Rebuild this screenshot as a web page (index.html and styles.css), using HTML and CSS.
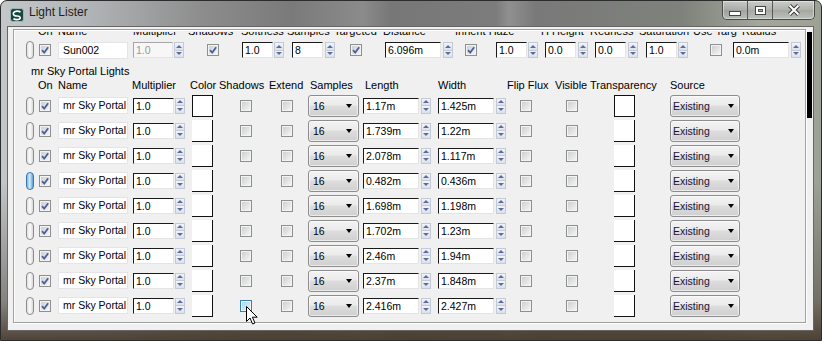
FILE: index.html
```html
<!DOCTYPE html>
<html lang="en">
<head>
    <meta charset="UTF-8">
    <title>Light Lister</title>
    <link rel="stylesheet" href="styles.css">
</head>
<body>

<div class="window">
    <div class="titlebar">
        <svg class="app-icon" viewBox="0 0 14 14">
            <rect x="0.5" y="0.5" width="13" height="13" rx="2.5" fill="#17463f" stroke="#9bb8b0"/>
            <path d="M10.5 4.2 C9 2.6 4.2 2.6 3.4 5 C2.8 7 4.6 8 7 8 C9.2 8 10.6 9 10.2 10.4 C9.6 12 5 12 3.4 10.6" fill="none" stroke="#fff" stroke-width="1.6"/>
        </svg>
        <span class="title">Light Lister</span>
        <div class="caption-buttons">
            <div class="cap-btn min"><span></span></div>
            <div class="cap-btn max"><span></span></div>
            <div class="cap-btn close">
                <svg viewBox="0 0 14 12"><path d="M2.5 1.5 L11.5 10.5 M11.5 1.5 L2.5 10.5" stroke="#3a3a3a" stroke-width="4"/><path d="M2.5 1.5 L11.5 10.5 M11.5 1.5 L2.5 10.5" stroke="#fff" stroke-width="2"/></svg>
            </div>
        </div>
    </div>

    <div class="client">
        <div class="panel">
            <div class="viewport">
                <div class="sheet">

                    <div class="hdr hdr-sun">
                        <span></span><span>On</span><span>Name</span><span>Multiplier</span><span>Shadows</span><span>Softness</span><span>Samples</span><span>Targeted</span><span>Distance</span><span>Inherit Haze</span><span>H Height</span><span>Redness</span><span>Saturation</span><span>Use Targ</span><span>Radius</span>
                    </div>

                    <div class="row row-sun">
                        <span class="slider"></span>
                        <span class="cb"><svg viewBox="0 0 10 10"><path d="M2 5.2 L4.2 7.6 L8.2 2.2"/></svg></span>
                        <span class="name">Sun002</span>
                        <span class="num"><span class="field w40 disabled">1.0</span><span class="spin"><i></i><i class="down"></i></span></span>
                        <span class="cb"><svg viewBox="0 0 10 10"><path d="M2 5.2 L4.2 7.6 L8.2 2.2"/></svg></span>
                        <span class="num"><span class="field w31">1.0</span><span class="spin"><i></i><i class="down"></i></span></span>
                        <span class="num"><span class="field w31">8</span><span class="spin gap2"><i></i><i class="down"></i></span></span>
                        <span class="cb"><svg viewBox="0 0 10 10"><path d="M2 5.2 L4.2 7.6 L8.2 2.2"/></svg></span>
                        <span class="num"><span class="field w56">6.096m</span><span class="spin gap2"><i></i><i class="down"></i></span></span>
                        <span class="cb"><svg viewBox="0 0 10 10"><path d="M2 5.2 L4.2 7.6 L8.2 2.2"/></svg></span>
                        <span class="num"><span class="field w31">1.0</span><span class="spin gap1"><i></i><i class="down"></i></span></span>
                        <span class="num"><span class="field w31">0.0</span><span class="spin gap2"><i></i><i class="down"></i></span></span>
                        <span class="num"><span class="field w31">0.0</span><span class="spin gap2"><i></i><i class="down"></i></span></span>
                        <span class="num"><span class="field w31">1.0</span><span class="spin gap1"><i></i><i class="down"></i></span></span>
                        <span class="cb"></span>
                        <span class="num"><span class="field w56">0.0m</span><span class="spin gap2"><i></i><i class="down"></i></span></span>
                    </div>

                    <div class="section">mr Sky Portal Lights</div>

                    <div class="hdr hdr-portal">
                        <span></span><span>On</span><span>Name</span><span>Multiplier</span><span>Color</span><span>Shadows</span><span>Extend</span><span>Samples</span><span>Length</span><span>Width</span><span>Flip Flux</span><span>Visible</span><span>Transparency</span><span>Source</span>
                    </div>

                    <div class="row row-portal">
                        <span class="slider"></span>
                        <span class="cb"><svg viewBox="0 0 10 10"><path d="M2 5.2 L4.2 7.6 L8.2 2.2"/></svg></span>
                        <span class="name">mr Sky Portal</span>
                        <span class="num"><span class="field w41">1.0</span><span class="spin"><i></i><i class="down"></i></span></span>
                        <span class="swatch boxed"></span>
                        <span class="cb"></span>
                        <span class="cb"></span>
                        <span class="combo samples">16</span>
                        <span class="num"><span class="field w56">1.17m</span><span class="spin gap2"><i></i><i class="down"></i></span></span>
                        <span class="num"><span class="field w56">1.425m</span><span class="spin gap2"><i></i><i class="down"></i></span></span>
                        <span class="cb"></span>
                        <span class="cb"></span>
                        <span class="swatch boxed"></span>
                        <span class="combo source">Existing</span>
                    </div>

                    <div class="row row-portal">
                        <span class="slider"></span>
                        <span class="cb"><svg viewBox="0 0 10 10"><path d="M2 5.2 L4.2 7.6 L8.2 2.2"/></svg></span>
                        <span class="name">mr Sky Portal</span>
                        <span class="num"><span class="field w41">1.0</span><span class="spin"><i></i><i class="down"></i></span></span>
                        <span class="swatch"></span>
                        <span class="cb"></span>
                        <span class="cb"></span>
                        <span class="combo samples">16</span>
                        <span class="num"><span class="field w56">1.739m</span><span class="spin gap2"><i></i><i class="down"></i></span></span>
                        <span class="num"><span class="field w56">1.22m</span><span class="spin gap2"><i></i><i class="down"></i></span></span>
                        <span class="cb"></span>
                        <span class="cb"></span>
                        <span class="swatch"></span>
                        <span class="combo source">Existing</span>
                    </div>

                    <div class="row row-portal">
                        <span class="slider"></span>
                        <span class="cb"><svg viewBox="0 0 10 10"><path d="M2 5.2 L4.2 7.6 L8.2 2.2"/></svg></span>
                        <span class="name">mr Sky Portal</span>
                        <span class="num"><span class="field w41">1.0</span><span class="spin"><i></i><i class="down"></i></span></span>
                        <span class="swatch"></span>
                        <span class="cb"></span>
                        <span class="cb"></span>
                        <span class="combo samples">16</span>
                        <span class="num"><span class="field w56">2.078m</span><span class="spin gap2"><i></i><i class="down"></i></span></span>
                        <span class="num"><span class="field w56">1.117m</span><span class="spin gap2"><i></i><i class="down"></i></span></span>
                        <span class="cb"></span>
                        <span class="cb"></span>
                        <span class="swatch"></span>
                        <span class="combo source">Existing</span>
                    </div>

                    <div class="row row-portal">
                        <span class="slider selected"></span>
                        <span class="cb"><svg viewBox="0 0 10 10"><path d="M2 5.2 L4.2 7.6 L8.2 2.2"/></svg></span>
                        <span class="name">mr Sky Portal</span>
                        <span class="num"><span class="field w41">1.0</span><span class="spin"><i></i><i class="down"></i></span></span>
                        <span class="swatch"></span>
                        <span class="cb"></span>
                        <span class="cb"></span>
                        <span class="combo samples">16</span>
                        <span class="num"><span class="field w56">0.482m</span><span class="spin gap2"><i></i><i class="down"></i></span></span>
                        <span class="num"><span class="field w56">0.436m</span><span class="spin gap2"><i></i><i class="down"></i></span></span>
                        <span class="cb"></span>
                        <span class="cb"></span>
                        <span class="swatch"></span>
                        <span class="combo source">Existing</span>
                    </div>

                    <div class="row row-portal">
                        <span class="slider"></span>
                        <span class="cb"><svg viewBox="0 0 10 10"><path d="M2 5.2 L4.2 7.6 L8.2 2.2"/></svg></span>
                        <span class="name">mr Sky Portal</span>
                        <span class="num"><span class="field w41">1.0</span><span class="spin"><i></i><i class="down"></i></span></span>
                        <span class="swatch"></span>
                        <span class="cb"></span>
                        <span class="cb"></span>
                        <span class="combo samples">16</span>
                        <span class="num"><span class="field w56">1.698m</span><span class="spin gap2"><i></i><i class="down"></i></span></span>
                        <span class="num"><span class="field w56">1.198m</span><span class="spin gap2"><i></i><i class="down"></i></span></span>
                        <span class="cb"></span>
                        <span class="cb"></span>
                        <span class="swatch"></span>
                        <span class="combo source">Existing</span>
                    </div>

                    <div class="row row-portal">
                        <span class="slider"></span>
                        <span class="cb"><svg viewBox="0 0 10 10"><path d="M2 5.2 L4.2 7.6 L8.2 2.2"/></svg></span>
                        <span class="name">mr Sky Portal</span>
                        <span class="num"><span class="field w41">1.0</span><span class="spin"><i></i><i class="down"></i></span></span>
                        <span class="swatch"></span>
                        <span class="cb"></span>
                        <span class="cb"></span>
                        <span class="combo samples">16</span>
                        <span class="num"><span class="field w56">1.702m</span><span class="spin gap2"><i></i><i class="down"></i></span></span>
                        <span class="num"><span class="field w56">1.23m</span><span class="spin gap2"><i></i><i class="down"></i></span></span>
                        <span class="cb"></span>
                        <span class="cb"></span>
                        <span class="swatch"></span>
                        <span class="combo source">Existing</span>
                    </div>

                    <div class="row row-portal">
                        <span class="slider"></span>
                        <span class="cb"><svg viewBox="0 0 10 10"><path d="M2 5.2 L4.2 7.6 L8.2 2.2"/></svg></span>
                        <span class="name">mr Sky Portal</span>
                        <span class="num"><span class="field w41">1.0</span><span class="spin"><i></i><i class="down"></i></span></span>
                        <span class="swatch"></span>
                        <span class="cb"></span>
                        <span class="cb"></span>
                        <span class="combo samples">16</span>
                        <span class="num"><span class="field w56">2.46m</span><span class="spin gap2"><i></i><i class="down"></i></span></span>
                        <span class="num"><span class="field w56">1.94m</span><span class="spin gap2"><i></i><i class="down"></i></span></span>
                        <span class="cb"></span>
                        <span class="cb"></span>
                        <span class="swatch"></span>
                        <span class="combo source">Existing</span>
                    </div>

                    <div class="row row-portal">
                        <span class="slider"></span>
                        <span class="cb"><svg viewBox="0 0 10 10"><path d="M2 5.2 L4.2 7.6 L8.2 2.2"/></svg></span>
                        <span class="name">mr Sky Portal</span>
                        <span class="num"><span class="field w41">1.0</span><span class="spin"><i></i><i class="down"></i></span></span>
                        <span class="swatch"></span>
                        <span class="cb"></span>
                        <span class="cb"></span>
                        <span class="combo samples">16</span>
                        <span class="num"><span class="field w56">2.37m</span><span class="spin gap2"><i></i><i class="down"></i></span></span>
                        <span class="num"><span class="field w56">1.848m</span><span class="spin gap2"><i></i><i class="down"></i></span></span>
                        <span class="cb"></span>
                        <span class="cb"></span>
                        <span class="swatch"></span>
                        <span class="combo source">Existing</span>
                    </div>

                    <div class="row row-portal">
                        <span class="slider"></span>
                        <span class="cb"><svg viewBox="0 0 10 10"><path d="M2 5.2 L4.2 7.6 L8.2 2.2"/></svg></span>
                        <span class="name">mr Sky Portal</span>
                        <span class="num"><span class="field w41">1.0</span><span class="spin"><i></i><i class="down"></i></span></span>
                        <span class="swatch"></span>
                        <span class="cb hover"></span>
                        <span class="cb"></span>
                        <span class="combo samples">16</span>
                        <span class="num"><span class="field w56">2.416m</span><span class="spin gap2"><i></i><i class="down"></i></span></span>
                        <span class="num"><span class="field w56">2.427m</span><span class="spin gap2"><i></i><i class="down"></i></span></span>
                        <span class="cb"></span>
                        <span class="cb"></span>
                        <span class="swatch"></span>
                        <span class="combo source">Existing</span>
                    </div>

                </div>
            </div>
        </div>
        <div class="vscroll"><div class="thumb"></div></div>
    </div>

    <!-- mouse pointer over the last Shadows checkbox -->
    <svg class="cursor" width="14" height="21" viewBox="0 0 14 21">
        <path d="M1.5 1.5 L1.5 16.5 L5 13 L7.6 19 L10 18 L7.4 12.2 L12.2 12.2 Z" fill="#fff" stroke="#000" stroke-width="1" stroke-linejoin="round"/>
    </svg>
</div>

</body>
</html>
```

FILE: styles.css
```css
* {
    box-sizing: border-box;
}

body {
    margin: 0;
    font-family: "Liberation Sans", Arial, sans-serif;
    font-size: 11px;
    color: #000;
}

.window {
    position: relative;
    width: 822px;
    height: 341px;
    border: 1px solid #2c2c2c;
    border-radius: 7px 7px 0 0;
    overflow: hidden;
    display: flex;
    flex-direction: column;
    background:
        linear-gradient(to bottom, rgba(60, 50, 40, 0) 180px, rgba(60, 50, 40, 0.45) 300px, rgba(72, 58, 44, 0.95) 341px),
        linear-gradient(to right, #c3c7ca 0, #b3b7b9 80px, #8d8d8d 200px, #7a7a7a 290px, #8b8b8b 362px, #777 390px, #7c7c7c 495px, #909090 508px, #797979 535px, #7f827b 680px, #a3a79c 760px, #9ca293 822px);
}

/* title bar */

.titlebar {
    height: 25px;
    display: flex;
    align-items: flex-start;
}

.app-icon {
    width: 14px;
    height: 14px;
    margin: 7px 0 0 9px;
}

.title {
    margin: 4px 0 0 5px;
    font-size: 12px;
    line-height: 15px;
    color: #1f1f1f;
}

.caption-buttons {
    margin-left: auto;
    margin-right: 6px;
    display: flex;
    height: 19px;
    border: 1px solid #4a4a4a;
    border-top: 0;
    border-radius: 0 0 5px 5px;
    overflow: hidden;
    box-shadow: inset 0 0 0 1px rgba(255, 255, 255, 0.55);
}

.cap-btn {
    display: flex;
    align-items: center;
    justify-content: center;
    background: linear-gradient(to bottom, rgba(235, 238, 240, 0.55), rgba(200, 205, 208, 0.35) 50%, rgba(170, 176, 180, 0.35) 51%, rgba(215, 220, 222, 0.5));
}

.cap-btn.min {
    width: 25px;
    border-right: 1px solid #5a5a5a;
}

.cap-btn.max {
    width: 25px;
    border-right: 1px solid #5a5a5a;
}

.cap-btn.close {
    width: 41px;
}

.cap-btn.min span {
    width: 12px;
    height: 5px;
    margin-top: 7px;
    background: #fff;
    border: 1px solid #444;
}

.cap-btn.max span {
    width: 11px;
    height: 9px;
    border: 1px solid #444;
    box-shadow: inset 0 0 0 2px #fff, inset 0 0 0 3px #555;
}

.cap-btn.close svg {
    width: 14px;
    height: 12px;
}

/* client area */

.client {
    margin: 0 7px 0 6px;
    height: 305px;
    border: 1px solid #666;
    background: #f0f0f0;
    display: flex;
    align-items: flex-start;
    padding: 2px 1px 0 5px;
}

.panel {
    width: 793px;
    height: 294px;
    border: 1px solid #a0a0a0;
    box-shadow: inset 1px 1px 0 #fff, 1px 1px 0 #fff;
    padding-top: 2px;
}

.viewport {
    height: 100%;
    overflow: hidden;
}

.sheet {
    margin-top: -8px;
    padding-left: 12px;
}

.vscroll {
    width: 5px;
    height: 301px;
    margin-left: 1px;
}

.vscroll .thumb {
    margin-top: 3px;
    height: 86px;
    background: #000;
}

/* header rows and grids */

.hdr {
    display: grid;
    white-space: nowrap;
}

.hdr-sun {
    height: 15px;
    line-height: 14px;
    grid-template-columns: 12px 20px 75px 55px 53px 46px 47px 49px 72px 86px 49px 49px 54px 49px 60px;
}

.hdr-portal {
    height: 15px;
    line-height: 15px;
    grid-template-columns: 12px 20px 74px 58px 29px 50px 41px 55px 73px 69px 48px 35px 80px 60px;
}

.section {
    margin-top: 3px;
    padding-left: 5px;
    line-height: 14px;
}

.row {
    display: grid;
    align-items: center;
}

.row-sun {
    height: 22px;
    grid-template-columns: 13px 19px 75px 74px 35px 50px 58px 35px 80px 31px 49px 50px 51px 64px 23px 70px;
}

.row-portal {
    height: 25px;
    grid-template-columns: 13px 19px 75px 59px 48px 41px 27px 55px 75px 82px 46px 48px 56px 70px;
}

/* controls */

.slider {
    width: 8px;
    height: 18px;
    border: 1px solid #8b8b8b;
    border-radius: 4px;
    background: linear-gradient(to right, #e2e2e2, #fbfbfb 50%, #d9d9d9);
}

.slider.selected {
    border-color: #3b78a8;
    background: linear-gradient(to right, #79b4e2, #d4ecfb 45%, #5b9fd6);
}

.cb {
    width: 12px;
    height: 12px;
    border: 1px solid #8e8f8f;
    background: linear-gradient(135deg, #c9cbce, #f8f8f8);
    box-shadow: inset 0 0 0 1px #f3f3f3;
    display: flex;
    align-items: center;
    justify-content: center;
}

.cb svg {
    width: 10px;
    height: 10px;
}

.cb svg path {
    fill: none;
    stroke: #4b5f9c;
    stroke-width: 1.8;
}

.cb.hover {
    border-color: #3c7fb1;
    background: linear-gradient(135deg, #a9d8f5, #def2fd);
}

.name {
    width: 70px;
    height: 17px;
    line-height: 15px;
    padding-left: 4px;
    background: #fff;
    border: 1px solid #e3e3e8;
    font-size: 10.5px;
    white-space: nowrap;
    overflow: hidden;
}

.num {
    display: flex;
    align-items: center;
}

.field {
    height: 16px;
    line-height: 14px;
    padding-left: 2px;
    background: #fff;
    border: 1px solid;
    border-color: #1a1a1a #e4e4e4 #e4e4e4 #1a1a1a;
    font-size: 10.5px;
    white-space: nowrap;
}

.field.disabled {
    color: #9a9a9a;
    background: #f7f7f7;
    border-color: #a6a6a6 #e4e4e4 #e4e4e4 #a6a6a6;
}

.w31 { width: 31px; }
.w40 { width: 40px; }
.w41 { width: 41px; }
.w56 { width: 56px; }

.spin {
    width: 10px;
    height: 16px;
    margin-left: 1px;
    display: flex;
    flex-direction: column;
    border: 1px solid #c3cad6;
}

.spin.gap1 { margin-left: 1px; }
.spin.gap2 { margin-left: 2px; }

.spin i {
    flex: 1;
    display: flex;
    align-items: center;
    justify-content: center;
    background: linear-gradient(to bottom, #f2f4f8, #dbe1ec);
}

.spin i::before {
    content: "";
    border-left: 3px solid transparent;
    border-right: 3px solid transparent;
    border-bottom: 3px solid #5a6c97;
}

.spin i.down {
    border-top: 1px solid #c3cad6;
}

.spin i.down::before {
    border-bottom: 0;
    border-top: 3px solid #5a6c97;
}

.swatch {
    width: 21px;
    height: 22px;
    background: #fff;
    border-right: 1px solid #111;
    border-bottom: 1px solid #111;
}

.swatch.boxed {
    border: 1px solid #111;
}

.combo {
    height: 22px;
    display: flex;
    align-items: center;
    border: 1px solid #8d8d8d;
    border-radius: 3px;
    background: linear-gradient(to bottom, #f3f3f3, #ebebeb 45%, #dddddd 50%, #cfcfcf);
    box-shadow: inset 0 0 0 1px rgba(255, 255, 255, 0.6);
    font-size: 10.5px;
    white-space: nowrap;
}

.combo::after {
    content: "";
    margin-left: auto;
    border-left: 3.5px solid transparent;
    border-right: 3.5px solid transparent;
    border-top: 4px solid #000;
}

.combo.samples {
    width: 51px;
    padding: 0 6px 0 4px;
}

.combo.source {
    width: 70px;
    padding: 0 5px 0 2px;
    color: #14143a;
}

.cursor {
    position: absolute;
    left: 244px;
    top: 304px;
}
```
